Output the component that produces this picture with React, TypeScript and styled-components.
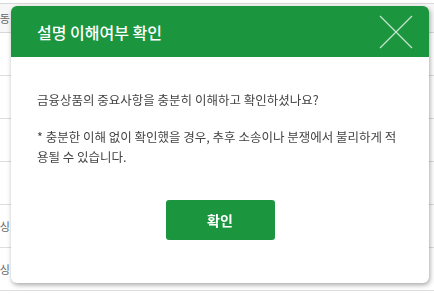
import React from "react";
import styled, { createGlobalStyle } from "styled-components";

const GlobalStyle = createGlobalStyle`
  html, body {
    margin: 0;
    padding: 0;
    background: #fff;
    font-family: "Noto Sans CJK KR", "Noto Sans", sans-serif;
  }
`;

const rows = ["", "", "", "", "소싱", "소싱"];

function App() {
  return (
    <>
      <GlobalStyle />
      <Page>
        <Table>
          <HeaderRow>
            <EdgeCell>보관동</EdgeCell>
          </HeaderRow>
          {rows.map((label, i) => (
            <Row key={i}>
              <EdgeCell>{label}</EdgeCell>
            </Row>
          ))}
        </Table>
      </Page>
      <Overlay>
        <Modal role="dialog" aria-labelledby="modal-title">
          <ModalHeader>
            <Title id="modal-title">설명 이해여부 확인</Title>
            <CloseButton aria-label="닫기">
              <svg width="34" height="34" viewBox="0 0 34 34">
                <path
                  d="M1 1 L33 33 M33 1 L1 33"
                  stroke="rgba(255,255,255,0.75)"
                  strokeWidth="1.2"
                  fill="none"
                />
              </svg>
            </CloseButton>
          </ModalHeader>
          <ModalBody>
            <Message>금융상품의 중요사항을 충분히 이해하고 확인하셨나요?</Message>
            <Notice>
              * 충분한 이해 없이 확인했을 경우, 추후 소송이나 분쟁에서 불리하게 적용될 수 있습니다.
            </Notice>
          </ModalBody>
          <ModalFooter>
            <ConfirmButton>확인</ConfirmButton>
          </ModalFooter>
        </Modal>
      </Overlay>
    </>
  );
}

export default App;

const Page = styled.div`
  width: 434px;
  height: 294px;
  overflow: hidden;
  padding-top: 3px;
  box-sizing: border-box;
`;

const Table = styled.div`
  display: flex;
  flex-direction: column;
  border-top: 1px solid #d8d8d8;
`;

const HeaderRow = styled.div`
  height: 28px;
  display: flex;
  align-items: center;
  background: #f7f7f7;
  border-bottom: 1px solid #d8d8d8;
`;

const Row = styled.div`
  height: 42px;
  display: flex;
  align-items: center;
  border-bottom: 1px solid #dedede;
`;

const EdgeCell = styled.div`
  width: 10px;
  overflow: hidden;
  display: flex;
  justify-content: flex-end;
  white-space: nowrap;
  font-size: 11px;
  color: #666;
`;

const Overlay = styled.div`
  position: fixed;
  inset: 0;
`;

const Modal = styled.div`
  position: absolute;
  left: 11px;
  top: 6px;
  width: 418px;
  height: 277px;
  background: #fff;
  border-radius: 6px;
  overflow: hidden;
  display: flex;
  flex-direction: column;
  box-shadow: 1px 2px 5px rgba(0, 0, 0, 0.35);
`;

const ModalHeader = styled.div`
  height: 51px;
  background: #1b963f;
  display: flex;
  align-items: center;
  justify-content: space-between;
  padding: 0 16px 0 26px;
  flex-shrink: 0;
`;

const Title = styled.h2`
  margin: 0;
  font-size: 16px;
  font-weight: 500;
  color: #fff;
`;

const CloseButton = styled.button`
  width: 34px;
  height: 34px;
  padding: 0;
  border: none;
  background: none;
  display: flex;
  cursor: pointer;
`;

const ModalBody = styled.div`
  padding: 33px 26px 0;
  color: #444;
  font-size: 12.5px;
  line-height: 20px;
`;

const Message = styled.p`
  margin: 0 0 17px;
`;

const Notice = styled.p`
  margin: 0;
  width: 366px;
`;

const ModalFooter = styled.div`
  display: flex;
  justify-content: center;
  padding-top: 33px;
`;

const ConfirmButton = styled.button`
  width: 109px;
  height: 40px;
  border: none;
  border-radius: 3px;
  background: #1b963f;
  color: #fff;
  font-family: inherit;
  font-size: 14px;
  font-weight: 700;
  cursor: pointer;
`;
